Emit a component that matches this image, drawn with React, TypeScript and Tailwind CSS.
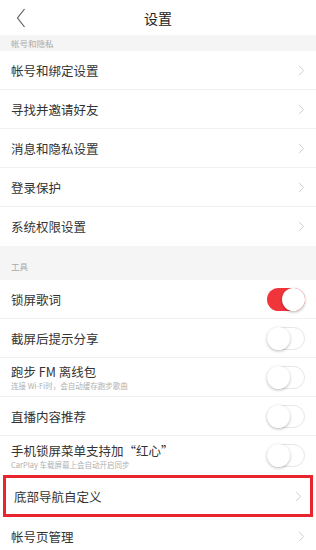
import React from "react";

const Chevron = () => (
  <svg width="7" height="11" viewBox="0 0 7 11" className="shrink-0">
    <path d="M1 0.8 L5.6 5.5 L1 10.2" fill="none" stroke="#c8c8c8" strokeWidth="0.9" />
  </svg>
);

const Toggle = ({ on }: { on?: boolean }) =>
  on ? (
    <div className="relative w-[38px] h-[23px] rounded-full bg-[#f0353b] shrink-0">
      <div className="absolute right-[0px] top-[0px] w-[23px] h-[23px] rounded-full bg-white shadow-[0_1px_3px_rgba(0,0,0,0.3)]" />
    </div>
  ) : (
    <div className="relative w-[38px] h-[23px] rounded-full bg-white border border-[#e6e6e6] shrink-0">
      <div className="absolute left-[-1px] top-[-1px] w-[23px] h-[23px] rounded-full bg-white shadow-[0_1px_3px_rgba(0,0,0,0.28)]" />
    </div>
  );

const Row = ({
  label,
  sub,
  toggle,
  on,
  last,
}: {
  label: string;
  sub?: string;
  toggle?: boolean;
  on?: boolean;
  last?: boolean;
}) => (
  <div
    className={`h-[39px] flex items-center justify-between pl-[11px] pr-[11px] bg-white ${
      last ? "" : "border-b border-[#f0f0f0]"
    }`}
  >
    <div className="flex flex-col justify-center">
      <div className={`text-[12.5px] text-[#333] ${sub ? "leading-[17px]" : "leading-[15px]"}`}>{label}</div>
      {sub && <div className="text-[7.5px] leading-[11px] text-[#b0b0b0]">{sub}</div>}
    </div>
    {toggle ? <Toggle on={on} /> : <Chevron />}
  </div>
);

export default function App() {
  return (
    <div
      className="w-[316px] h-[550px] overflow-hidden bg-white"
      style={{ fontFamily: '"Noto Sans CJK SC", "Noto Sans", sans-serif' }}
    >
      <div className="h-[35px] relative flex items-center justify-center bg-white">
        <svg width="10" height="20" viewBox="0 0 10 20" className="absolute left-[16px] top-[8px]">
          <path d="M8.5 1 L1.5 10 L8.5 19" fill="none" stroke="#555" strokeWidth="1.1" />
        </svg>
        <div className="text-[14px] text-[#222] leading-none">设置</div>
      </div>
      <div className="h-[16px] bg-[#f5f5f5] pl-[11px] flex items-center">
        <div className="text-[8.5px] leading-[11px] text-[#aaa]">帐号和隐私</div>
      </div>
      <Row label="帐号和绑定设置" />
      <Row label="寻找并邀请好友" />
      <Row label="消息和隐私设置" />
      <Row label="登录保护" />
      <Row label="系统权限设置" last />
      <div className="h-[34px] bg-[#f5f5f5] pl-[11px] flex items-end pb-[9px]">
        <div className="text-[8.5px] leading-[10px] text-[#aaa]">工具</div>
      </div>
      <Row label="锁屏歌词" toggle on />
      <Row label="截屏后提示分享" toggle />
      <Row label="跑步 FM 离线包" sub="连接 Wi-Fi时，会自动缓存跑步歌曲" toggle />
      <Row label="直播内容推荐" toggle />
      <Row label="手机锁屏菜单支持加“红心”" sub="CarPlay 车载屏幕上会自动开启同步" toggle last />
      <div className="mx-[3px] border-[3px] border-[#e8242f]">
        <div className="h-[36px] flex items-center justify-between pl-[8px] pr-[8px] bg-white">
          <div className="text-[12.5px] leading-[15px] text-[#333]">底部导航自定义</div>
          <Chevron />
        </div>
      </div>
      <Row label="帐号页管理" last />
    </div>
  );
}
